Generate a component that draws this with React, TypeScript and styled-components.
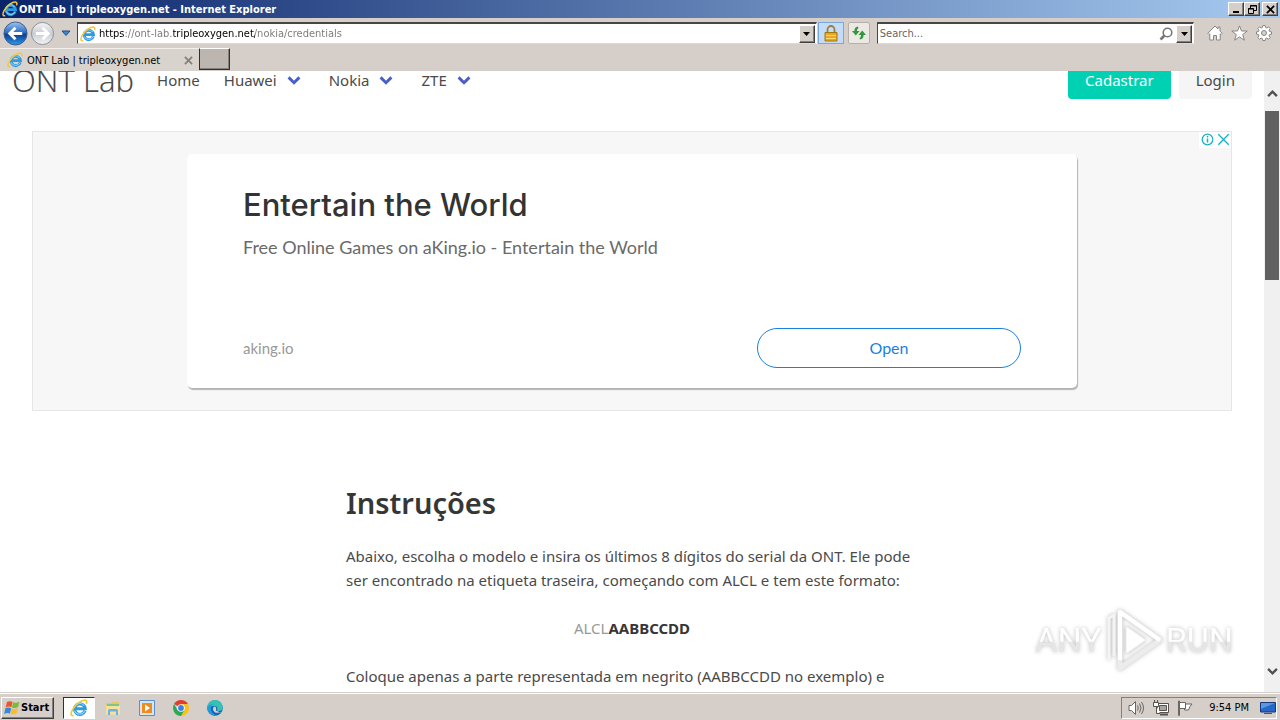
import React from "react";
import styled, { createGlobalStyle, css } from "styled-components";

const UI = `"DejaVu Sans Condensed", "DejaVu Sans", sans-serif`;
const BODY = `"Noto Sans", "Open Sans", sans-serif`;
const AD = `Lato, "Open Sans", sans-serif`;

const Global = createGlobalStyle`
  * { box-sizing: border-box; }
  body { margin: 0; background: #fff; overflow: hidden; }
  button, input { font: inherit; margin: 0; }
  svg { display: block; flex: none; }
`;

const Window = styled.div`
  display: flex;
  flex-direction: column;
  height: 100vh;
  font-family: ${UI};
  font-size: 11px;
  color: #000;
  background: #d6cfc9;
`;

const raised = css`
  background: #d6cfc9;
  border: 1px solid;
  border-color: #fff #404040 #404040 #fff;
  box-shadow: inset -1px -1px 0 #85807b;
`;

const sunken = css`
  border: 1px solid;
  border-color: #85807b #fff #fff #85807b;
`;

const TitleBar = styled.header`
  display: flex;
  align-items: center;
  flex: none;
  height: 18px;
  padding: 0 2px;
  gap: 1px;
  color: #fff;
  font-weight: 700;
  background: linear-gradient(90deg, #0a246a, #a6caf0);
`;

const TitleText = styled.span`
  flex: 1;
  white-space: nowrap;
`;

const CaptionButtons = styled.div`
  display: flex;
`;

const CaptionButton = styled.button<{ $gap?: boolean }>`
  ${raised}
  display: flex;
  align-items: center;
  justify-content: center;
  width: 16px;
  height: 14px;
  padding: 0;
  margin-left: ${(p) => (p.$gap ? 2 : 0)}px;
`;

const AddressRow = styled.div`
  display: flex;
  align-items: center;
  flex: none;
  height: 30px;
  padding: 0 8px 0 3px;
`;

const HistoryButtons = styled.div`
  display: flex;
  align-items: center;
  gap: 2px;
  width: 74px;
`;

const PlainButton = styled.button`
  display: flex;
  align-items: center;
  justify-content: center;
  padding: 0;
  border: 0;
  background: none;
`;

const Field = styled.div`
  display: flex;
  align-items: center;
  flex: 1 1 0;
  min-width: 0;
  height: 22px;
  padding: 0 1px 0 2px;
  gap: 3px;
  background: #fff;
  border: 1px solid;
  border-color: #4a4545 #fff #e0d8d2 #4a4545;
  border-top-width: 2px;
`;

const FieldInput = styled.input`
  flex: 1;
  min-width: 0;
  padding: 0;
  border: 0;
  outline: 0;
  color: #666;
  background: none;
  &::placeholder { color: #666; opacity: 1; }
`;

const UrlInput = styled(FieldInput)`
  color: transparent;
  background: linear-gradient(90deg, #000 26px, #777 26px 74px, #000 74px 156px, #777 156px);
  background-clip: text;
  -webkit-background-clip: text;
`;

const DropButton = styled.button`
  ${raised}
  display: flex;
  align-items: center;
  justify-content: center;
  width: 16px;
  height: 18px;
  padding: 0;
`;

const ToolButton = styled.button<{ $active?: boolean }>`
  display: flex;
  align-items: center;
  justify-content: center;
  width: ${(p) => (p.$active ? 26 : 22)}px;
  height: 22px;
  padding: 0;
  margin-left: ${(p) => (p.$active ? 1 : 4)}px;
  background: ${(p) => (p.$active ? "#c4dcf8" : "#ece8e4")};
  border: 1px solid ${(p) => (p.$active ? "#78a8e0" : "#b8b0a8")};
  border-radius: ${(p) => (p.$active ? 0 : 2)}px;
`;

const SearchWrap = styled.div`
  display: flex;
  width: 25%;
  margin-left: 7px;
`;

const CommandIcons = styled.div`
  display: flex;
  gap: 8px;
  margin-left: 13px;
`;

const TabRow = styled.div`
  display: flex;
  flex: none;
  height: 23px;
`;

const Tab = styled.div`
  display: flex;
  align-items: center;
  width: 199px;
  padding: 0 6px 0 7px;
  gap: 4px;
  background: #d9d3cd;
  border-top: 1px solid #f4f0ec;
`;

const TabLabel = styled.span`
  flex: 1;
  white-space: nowrap;
`;

const NewTab = styled.button`
  width: 31px;
  height: 22px;
  background: #bdb5b0;
  border: 1px solid;
  border-color: #fff #303030 #303030 #303030;
  box-shadow: inset -1px -1px 0 #85807b;
`;

const Pane = styled.div`
  display: flex;
  flex: 1;
  min-height: 0;
  background: #fff;
`;

const Page = styled.main`
  flex: 1;
  min-width: 0;
  overflow: hidden;
  font-family: ${BODY};
  font-size: 15px;
  line-height: 24px;
  color: #4a4a4a;
`;

const NavBar = styled.nav`
  display: flex;
  align-items: center;
  height: 52px;
  margin-top: -17px;
  padding-right: 12px;
`;

const Brand = styled.a`
  padding: 0 11px 0 12px;
  font-size: 31px;
  line-height: 52px;
  font-weight: 300;
  color: #4a4a4a;
  text-decoration: none;
`;

const NavLink = styled.a`
  display: flex;
  align-items: center;
  gap: 10px;
  padding: 8px 12px;
  color: #4a4a4a;
  text-decoration: none;
`;

const NavMenu = styled(NavLink)`
  padding-right: 16px;
`;

const NavActions = styled.div`
  display: flex;
  gap: 8px;
  margin-left: auto;
`;

const ActionLink = styled.a<{ $primary?: boolean }>`
  padding: 6px 17px 7px;
  border-radius: 4px;
  text-decoration: none;
  color: ${(p) => (p.$primary ? "#fff" : "#4a4a4a")};
  background: ${(p) => (p.$primary ? "#00d1b2" : "#f5f5f5")};
`;

const AdFrame = styled.aside`
  position: relative;
  display: flex;
  justify-content: center;
  margin: 25px 32px 0;
  padding: 22px 24px;
  background: #f7f7f7;
  border: 1px solid #e6e6e6;
`;

const AdChoices = styled.div`
  position: absolute;
  top: 0;
  right: 0;
  display: flex;
  gap: 3px;
  padding: 1px 1px 2px 2px;
  background: #fff;
`;

const AdCard = styled.div`
  display: flex;
  flex-direction: column;
  width: 100%;
  max-width: 890px;
  height: 234px;
  padding: 31px 56px 20px;
  border-radius: 5px;
  background: #fff;
  box-shadow: 1px 2px 1px #b4b4b4;
  font-family: ${AD};
`;

const AdTitle = styled.h2`
  margin: 0;
  font-family: Inter, ${AD};
  font-size: 31px;
  line-height: 40px;
  font-weight: 500;
  color: #333;
`;

const AdText = styled.p`
  margin: 9px 0 0;
  font-size: 18px;
  line-height: 26px;
  color: #6a6a6a;
`;

const AdFooter = styled.div`
  display: flex;
  align-items: center;
  justify-content: space-between;
  margin-top: auto;
  font-size: 15px;
  color: #999;
`;

const OpenButton = styled.button`
  width: 264px;
  height: 40px;
  border: 1px solid #1a7fe0;
  border-radius: 20px;
  background: #fff;
  color: #1a7fe0;
  font-size: 16px;
`;

const Article = styled.article`
  max-width: 572px;
  margin: 74px auto 0;
  white-space: nowrap;
`;

const Heading = styled.h1`
  margin: 0 0 23px;
  font-size: 29px;
  line-height: 36px;
  font-weight: 600;
  color: #363636;
`;

const Para = styled.p<{ $center?: boolean }>`
  margin: 0 0 24px;
  text-align: ${(p) => (p.$center ? "center" : "left")};
`;

const Prefix = styled.span`
  color: #999;
`;

const Serial = styled.strong`
  font-weight: 700;
  color: #363636;
`;

const ScrollTrack = styled.div`
  display: flex;
  flex-direction: column;
  width: 16px;
  padding-bottom: 3px;
  background: #f0f0f0;
`;

const ScrollArrow = styled(PlainButton)`
  height: 40px;
  padding-top: 4px;
`;

const ScrollThumb = styled.div`
  height: 169px;
  margin: 0 1px auto;
  background: #606060;
`;

const TaskBar = styled.footer`
  display: flex;
  align-items: center;
  flex: none;
  height: 28px;
  padding: 2px 3px 0 1px;
  border-top: 1px solid #d6cfc9;
  box-shadow: inset 0 1px 0 #fff;
`;

const StartButton = styled.button`
  ${raised}
  display: flex;
  align-items: center;
  gap: 1px;
  width: 53px;
  height: 22px;
  padding: 0 2px;
  font-weight: 700;
`;

const Pinned = styled.div`
  display: flex;
  margin-left: 9px;
  gap: 2px;
`;

const PinnedButton = styled(PlainButton)<{ $active?: boolean }>`
  width: 32px;
  height: 22px;
  ${(p) =>
    p.$active &&
    css`
      background: #fff;
      border: 1px solid;
      border-color: #303030 #fff #fff #303030;
    `}
`;

const Tray = styled.div`
  ${sunken}
  display: flex;
  align-items: center;
  gap: 8px;
  height: 22px;
  margin-left: auto;
  padding: 0 0 0 6px;
`;

const Clock = styled.time`
  margin: 0 3px 0 8px;
`;

const Watermark = styled.div`
  position: fixed;
  right: 47px;
  bottom: 48px;
  display: flex;
  align-items: center;
  gap: 3px;
  font-family: Roboto, "Liberation Sans", sans-serif;
  font-size: 34px;
  line-height: 62px;
  pointer-events: none;
  filter: drop-shadow(0 0 2px #bbb);
`;

const MarkText = styled.span`
  color: transparent;
  background: linear-gradient(#fff 52%, #e6e6e6 54%);
  background-clip: text;
  -webkit-background-clip: text;
`;

const IeLogo = ({ size = 16 }: { size?: number }) => (
  <svg width={size} height={size} viewBox="0 0 16 16" fill="none">
    <path d="M13.3 10.4A4.700 4.700 0 1 1 13.5 8.700H5" stroke="#2d9be2" strokeWidth="2.800" />
    <path d="M13 10.9A5 5 0 0 1 4 10.400M4 6.600A5 5 0 0 1 12.600 6" stroke="#8ad4f8" strokeWidth="1" />
    <path d="M3.200 14.600C.6 15.400.2 13 2.400 9.200 5 4.600 10.600.6 13.600 1c1.700.3 1.500 2 .8 3.400" stroke="#f3c83a" strokeWidth="1.500" />
  </svg>
);

const Chevron = ({ color, up, w = 14 }: { color: string; up?: boolean; w?: number }) => (
  <svg width={w} height="9" viewBox="0 0 12 8" fill="none" stroke={color} strokeWidth="2.600">
    <path d={up ? "M1.200 6.800 6 2l4.800 4.800" : "M1.200 1.200 6 6l4.800-4.800"} />
  </svg>
);

const Triangle = () => (
  <svg width="7" height="4" viewBox="0 0 7 4"><path d="M0 0h7L3.500 4z" fill="#000" /></svg>
);

const BackIcon = () => (
  <svg width="25" height="25" viewBox="0 0 26 26">
    <defs>
      <linearGradient id="back" x1="0" y1="0" x2="0" y2="1">
        <stop offset="0" stopColor="#9cc4ee" />
        <stop offset=".45" stopColor="#2f6fc4" />
        <stop offset=".55" stopColor="#0d3f97" />
        <stop offset="1" stopColor="#2f9be8" />
      </linearGradient>
    </defs>
    <circle cx="13" cy="13" r="12" fill="url(#back)" stroke="#3a5d90" />
    <path d="M20 13H8M13 7l-6 6 6 6" fill="none" stroke="#fff" strokeWidth="3" />
  </svg>
);

const ForwardIcon = () => (
  <svg width="25" height="25" viewBox="0 0 26 26">
    <defs>
      <linearGradient id="fwd" x1="0" y1="0" x2="0" y2="1">
        <stop offset="0" stopColor="#f4f5f7" />
        <stop offset=".5" stopColor="#c9cdd3" />
        <stop offset="1" stopColor="#f2f4f6" />
      </linearGradient>
    </defs>
    <circle cx="13" cy="13" r="11.500" fill="url(#fwd)" stroke="#8a8e95" />
    <path d="M6 13h12M13 7l6 6-6 6" fill="none" stroke="#fff" strokeWidth="3" />
  </svg>
);

const LockIcon = () => (
  <svg width="14" height="17" viewBox="0 0 14 17">
    <path d="M3.500 8V4.500a3.500 3.500 0 0 1 7 0V8" fill="none" stroke="#9a8040" strokeWidth="1.800" />
    <path d="M1 7.500h12V16H1z" fill="#e9a91c" stroke="#a87410" />
    <path d="M2 10.500h10M2 13.500h10" stroke="#f8d774" />
  </svg>
);

const RefreshIcon = () => (
  <svg width="16" height="16" viewBox="0 0 16 16" fill="#2e9a3a">
    <path d="M7 1.500C4.600 1.700 3.400 3.200 3.400 6H1l3.800 4.500L8.500 6H6c0-1.500.2-2.400 1.400-2.800z" />
    <path d="M9 14.500c2.400-.2 3.600-1.700 3.600-4.500H15l-3.800-4.500L7.500 10H10c0 1.500-.2 2.400-1.400 2.800z" />
  </svg>
);

const Magnifier = () => (
  <svg width="14" height="14" viewBox="0 0 14 14" fill="none" stroke="#777">
    <circle cx="8.500" cy="5.500" r="4.300" strokeWidth="1.600" />
    <path d="M5.500 8.500 1.500 12.500" strokeWidth="2.600" />
  </svg>
);

const HomeIcon = () => (
  <svg width="16" height="16" viewBox="0 0 16 16" fill="#fff" stroke="#8b8682">
    <path d="M8 1 .8 8.300l1.200 1.200.8-.7V15h3.700v-4.500h3V15h3.700V8.800l.8.7 1.200-1.200-2.200-2.200V2h-2v2z" />
  </svg>
);

const StarIcon = () => (
  <svg width="17" height="16" viewBox="0 0 17 16" fill="#fff" stroke="#8b8682">
    <path d="m8.500.8 2 5.200h5.700l-4.500 3.600 1.700 5.600-4.900-3.300-4.900 3.300 1.700-5.600L.8 6h5.700z" />
  </svg>
);

const GearIcon = () => (
  <svg width="16" height="16" viewBox="0 0 16 16" fill="#fff" stroke="#8b8682">
    <path d="M6.800.6h2.400l.4 2 1.200.5 1.700-1.200 1.700 1.700L13 5.300l.5 1.200 2 .4v2.300l-2 .4-.5 1.200 1.200 1.700-1.700 1.700-1.700-1.200-1.200.5-.4 2H6.800l-.4-2-1.200-.5-1.700 1.200-1.700-1.700L3 10.800l-.5-1.200-2-.4V6.900l2-.4L3 5.300 1.800 3.600l1.700-1.700 1.700 1.200 1.200-.5z" />
    <circle cx="8" cy="8" r="2.500" fill="#d6cfc9" />
  </svg>
);

const InfoIcon = () => (
  <svg width="13" height="13" viewBox="0 0 13 13" fill="none" stroke="#12b3c4">
    <circle cx="6.500" cy="6.500" r="5.300" strokeWidth="1.200" />
    <path d="M6.500 5.500v4M6.500 3v1.500" strokeWidth="1.500" />
  </svg>
);

const CrossIcon = ({ color, size, weight }: { color: string; size: number; weight: number }) => (
  <svg width={size} height={size} viewBox="0 0 10 10" stroke={color} strokeWidth={weight}>
    <path d="m1 1 8 8M9 1 1 9" />
  </svg>
);

const WindowsFlag = () => (
  <svg width="16" height="16" viewBox="0 0 16 16">
    <path d="M3 2c2-1.200 4-1 5.600-.2L7.400 7.200C5.600 6.400 3.800 6.400 1.600 7.400z" fill="#e8562a" />
    <path d="M9.200 2.200c1.900.8 3.900.7 6.300-.5l-1.400 5.400c-2.200 1.100-4.200 1.100-6.200.3z" fill="#7cba3c" />
    <path d="M1.400 8.300c2.200-1 4-1 5.800-.1L5.900 13.600C4.100 12.800 2.200 12.900.1 14z" fill="#3a86d8" />
    <path d="M7.700 8.500c2 .8 4 .7 6.300-.4l-1.400 5.400c-2.200 1.100-4.300 1.100-6.200.3z" fill="#f6bf2a" />
  </svg>
);

const FolderIcon = () => (
  <svg width="16" height="16" viewBox="0 0 16 16">
    <path d="M1 3h5l1-1h7v6H1z" fill="#e8c864" />
    <path d="M2 4h12v3H2z" fill="#7fc48a" />
    <path d="M1 6h14v8.500H1z" fill="#f6e29a" />
    <path d="M3 15v-4c0-1.500 1-2 2-2h6c1 0 2 .5 2 2v4h-2v-3.500H5V15z" fill="#69b4e4" />
  </svg>
);

const PlayerIcon = () => (
  <svg width="16" height="16" viewBox="0 0 16 16">
    <path d="M.5.5h15v15H.5z" fill="#d4e6f6" stroke="#5a8fc8" />
    <path d="M3 3h10v10H3z" fill="#f08a1c" />
    <path d="M6 4.500 11 8l-5 3.500z" fill="#fff" />
  </svg>
);

const ChromeIcon = () => (
  <svg width="16" height="16" viewBox="0 0 16 16">
    <path d="M8 8 1.100 4A8 8 0 0 1 14.900 4z" fill="#e33b2e" />
    <path d="M8 8V4h6.900A8 8 0 0 1 8 16l3.500-6z" fill="#fbc116" />
    <path d="m8 8 3.500 2L8 16A8 8 0 0 1 1.100 4l3.400 6z" fill="#2da94f" />
    <circle cx="8" cy="8" r="3.800" fill="#fff" />
    <circle cx="8" cy="8" r="2.900" fill="#3f7ee8" />
  </svg>
);

const EdgeIcon = () => (
  <svg width="16" height="16" viewBox="0 0 16 16">
    <circle cx="8" cy="8" r="7.800" fill="#1565b8" />
    <path d="M.2 8A7.800 7.800 0 0 1 15.800 7.500c0 2.500-1.800 3.500-3.800 3.500-1.500 0-2.500-.5-2-1.200.8-1 .5-3.800-2.800-3.800C4 6 1 7 .2 8z" fill="#35c1b4" />
    <path d="M.2 8C1 5 4 4 6.500 4.500c-3 1.500-3.500 5-1.500 8 1 1.600 3 2.500 5 2.800A7.800 7.800 0 0 1 .2 8z" fill="#1f9de0" />
    <path d="M9 9.800c.5-1.500-.2-3-1.600-3.200-1.900 1-1.900 4 .1 5.400 1.800 1.200 4.500 1 6.500 0l-1 1-1.500-1.600C10 11.300 8.700 10.800 9 9.800z" fill="#d6cfc9" />
  </svg>
);

const SpeakerIcon = () => (
  <svg width="17" height="16" viewBox="0 0 17 16" fill="none" stroke="#6a6662">
    <path d="M1 5.500h2.500l4-4v13l-4-4H1z" fill="#fff" />
    <path d="M9.500 5.500q1.500 2.500 0 5M11.500 3.500q3 4.500 0 9M13.500 2q4 6 0 12" />
  </svg>
);

const NetworkIcon = () => (
  <svg width="16" height="16" viewBox="0 0 16 16" stroke="#55524f">
    <path d="M4.500 3.500h11v9h-11z" fill="#fff" />
    <path d="M6.500 5.500h7v5h-7z" fill="#aaa5a0" />
    <path d="M7 14.500h8" strokeWidth="2" />
    <path d="M.5 2.500h5v4h-5zM1.500 0v2M4.500 0v2M3.500 6v7.500H7" fill="#fff" />
  </svg>
);

const FlagIcon = () => (
  <svg width="16" height="16" viewBox="0 0 16 16" fill="#fff" stroke="#6a6662">
    <path d="M1.500 1v14.500h1V1zM2.500 2.500h6v6h-6zM8.500 4H15l-2 2.500-1.500 3.500H7.500V8.500h1z" />
  </svg>
);

const ScreenIcon = () => (
  <svg width="16" height="14" viewBox="0 0 16 14">
    <path d="M.5 1.500h15v9.500H.5z" fill="#2668c8" stroke="#16397c" />
    <path d="M1 2h14L1 8z" fill="#5a96e2" />
    <path d="M4 12h8v1H4z" fill="#555" />
  </svg>
);

const PlayMark = () => (
  <svg width="58" height="64" viewBox="0 0 58 64" fill="none" strokeLinejoin="round">
    <path d="M4 52V10l5-3v41" stroke="#f4f4f4" strokeWidth="3" />
    <path d="M15 4v56l40-28z" stroke="#ececec" strokeWidth="5" />
    <path d="M15 52V4l40 28" stroke="#fff" strokeWidth="4" />
    <path d="M21 18v28l20-14z" fill="#fff" stroke="#e8e8e8" />
  </svg>
);

const menus = ["Huawei", "Nokia", "ZTE"];

export default function App() {
  return (
    <>
      <Global />
      <Window>
        <TitleBar>
          <IeLogo />
          <TitleText>ONT Lab | tripleoxygen.net - Internet Explorer</TitleText>
          <CaptionButtons>
            <CaptionButton aria-label="Minimize">
              <svg width="8" height="8"><path d="M1 6h6v2H1z" /></svg>
            </CaptionButton>
            <CaptionButton aria-label="Restore">
              <svg width="9" height="9" fill="none" stroke="#000"><path d="M2.500 3V.5h6v5H6M2 1h7M.5 3.500h5v5h-5zM0 4h6" /></svg>
            </CaptionButton>
            <CaptionButton aria-label="Close" $gap>
              <CrossIcon color="#000" size={9} weight={2} />
            </CaptionButton>
          </CaptionButtons>
        </TitleBar>

        <AddressRow>
          <HistoryButtons>
            <PlainButton aria-label="Back"><BackIcon /></PlainButton>
            <PlainButton aria-label="Forward"><ForwardIcon /></PlainButton>
            <PlainButton aria-label="Recent pages">
              <svg width="18" height="7" viewBox="0 0 18 7"><path d="M5 1h8L9 5.500z" fill="#3d8ad0" stroke="#1d4f88" /></svg>
            </PlainButton>
          </HistoryButtons>
          <Field>
            <IeLogo />
            <UrlInput aria-label="Address" defaultValue="https://ont-lab.tripleoxygen.net/nokia/credentials" />
            <DropButton aria-label="Show addresses"><Triangle /></DropButton>
          </Field>
          <ToolButton $active aria-label="Security report"><LockIcon /></ToolButton>
          <ToolButton aria-label="Refresh"><RefreshIcon /></ToolButton>
          <SearchWrap>
            <Field>
              <FieldInput aria-label="Search" placeholder="Search..." />
              <Magnifier />
              <DropButton aria-label="Search options"><Triangle /></DropButton>
            </Field>
          </SearchWrap>
          <CommandIcons>
            <PlainButton aria-label="Home"><HomeIcon /></PlainButton>
            <PlainButton aria-label="Favorites"><StarIcon /></PlainButton>
            <PlainButton aria-label="Tools"><GearIcon /></PlainButton>
          </CommandIcons>
        </AddressRow>

        <TabRow>
          <Tab>
            <IeLogo />
            <TabLabel>ONT Lab | tripleoxygen.net</TabLabel>
            <PlainButton aria-label="Close tab"><CrossIcon color="#858079" size={9} weight={2} /></PlainButton>
          </Tab>
          <NewTab aria-label="New tab" />
        </TabRow>

        <Pane>
          <Page>
            <NavBar>
              <Brand href="#">ONT Lab</Brand>
              <NavLink href="#">Home</NavLink>
              {menus.map((name) => (
                <NavMenu href="#" key={name}>
                  {name}
                  <Chevron color="#485fc7" />
                </NavMenu>
              ))}
              <NavActions>
                <ActionLink href="#" $primary>Cadastrar</ActionLink>
                <ActionLink href="#">Login</ActionLink>
              </NavActions>
            </NavBar>

            <AdFrame>
              <AdChoices>
                <InfoIcon />
                <CrossIcon color="#12b3c4" size={13} weight={1} />
              </AdChoices>
              <AdCard>
                <AdTitle>Entertain the World</AdTitle>
                <AdText>Free Online Games on aKing.io - Entertain the World</AdText>
                <AdFooter>
                  <span>aking.io</span>
                  <OpenButton>Open</OpenButton>
                </AdFooter>
              </AdCard>
            </AdFrame>

            <Article>
              <Heading>Instruções</Heading>
              <Para>
                Abaixo, escolha o modelo e insira os últimos 8 dígitos do serial da ONT. Ele pode
                <br />
                ser encontrado na etiqueta traseira, começando com ALCL e tem este formato:
              </Para>
              <Para $center>
                <Prefix>ALCL</Prefix>
                <Serial>AABBCCDD</Serial>
              </Para>
              <Para>Coloque apenas a parte representada em negrito (AABBCCDD no exemplo) e</Para>
            </Article>
          </Page>
          <ScrollTrack>
            <ScrollArrow aria-label="Scroll up"><Chevron color="#505050" up w={11} /></ScrollArrow>
            <ScrollThumb />
            <ScrollArrow aria-label="Scroll down"><Chevron color="#505050" w={11} /></ScrollArrow>
          </ScrollTrack>
        </Pane>

        <TaskBar>
          <StartButton><WindowsFlag />Start</StartButton>
          <Pinned>
            <PinnedButton $active aria-label="Internet Explorer"><IeLogo size={18} /></PinnedButton>
            <PinnedButton aria-label="Explorer"><FolderIcon /></PinnedButton>
            <PinnedButton aria-label="Media Player"><PlayerIcon /></PinnedButton>
            <PinnedButton aria-label="Chrome"><ChromeIcon /></PinnedButton>
            <PinnedButton aria-label="Edge"><EdgeIcon /></PinnedButton>
          </Pinned>
          <Tray>
            <SpeakerIcon />
            <NetworkIcon />
            <FlagIcon />
            <Clock>9:54 PM</Clock>
            <ScreenIcon />
          </Tray>
        </TaskBar>
      </Window>
      <Watermark>
        <MarkText>ANY</MarkText>
        <PlayMark />
        <MarkText>RUN</MarkText>
      </Watermark>
    </>
  );
}
